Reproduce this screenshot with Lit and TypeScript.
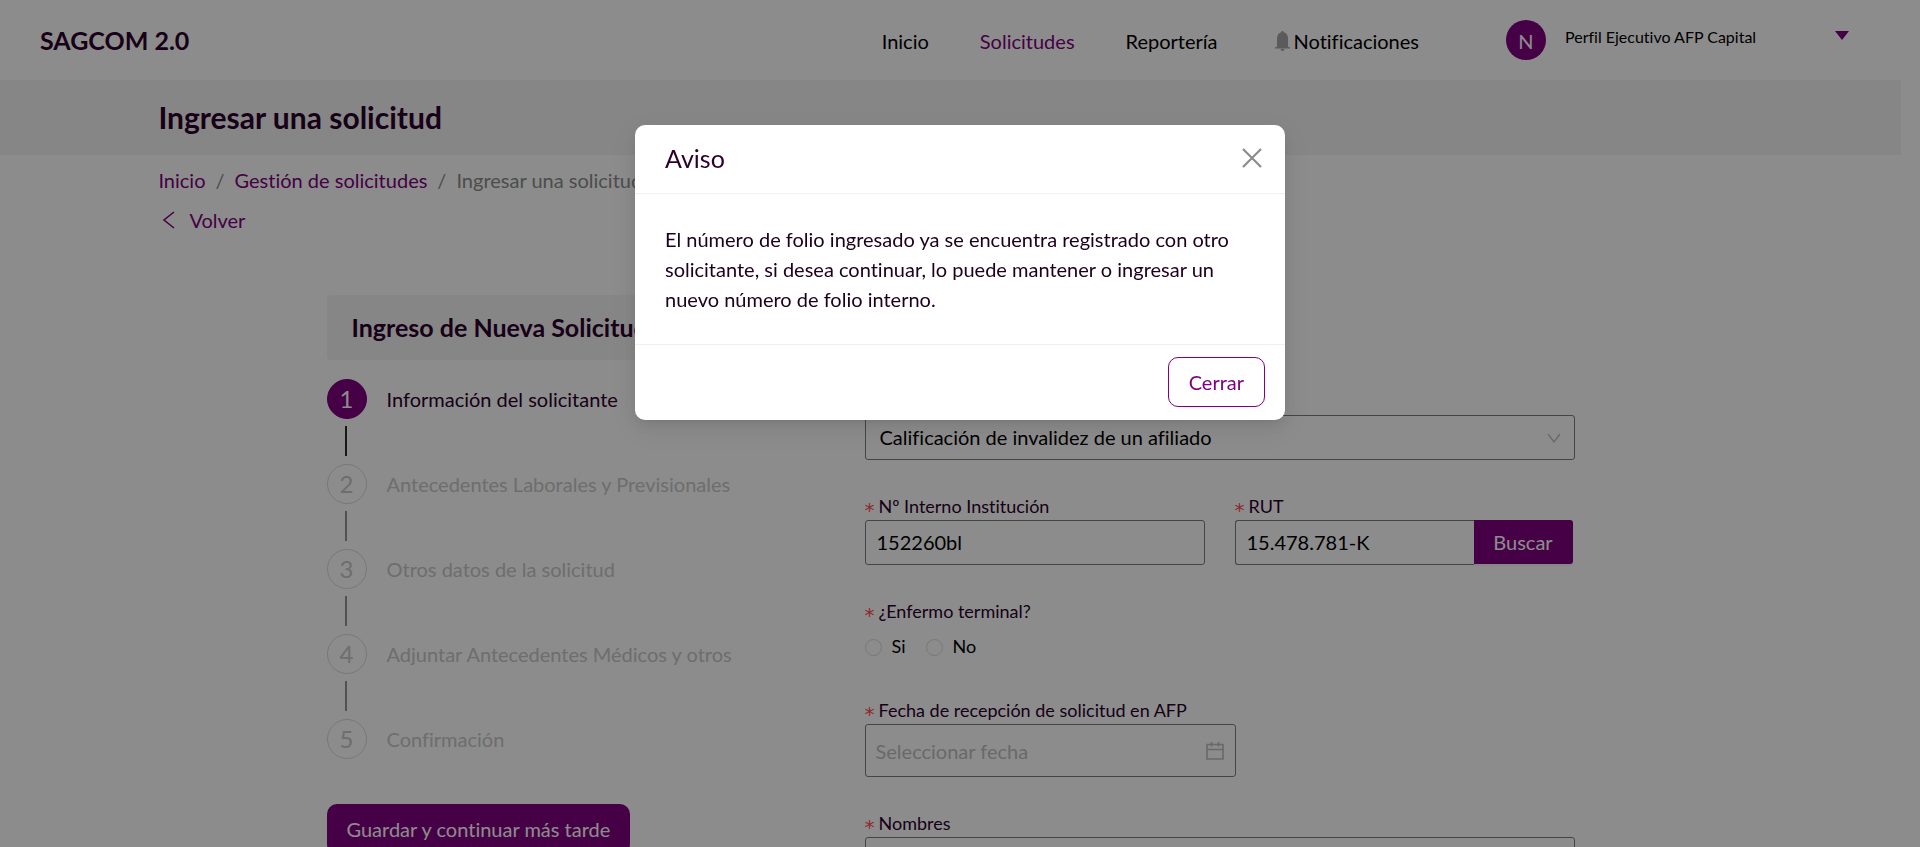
import { LitElement, html, css, svg } from "lit";
import { customElement } from "lit/decorators.js";
import { classMap } from "lit/directives/class-map.js";

const steps = [
  "Información del solicitante",
  "Antecedentes Laborales y Previsionales",
  "Otros datos de la solicitud",
  "Adjuntar Antecedentes Médicos y otros",
  "Confirmación",
];

const chevronLeft = svg`<path d="M12 1 L2 9 L12 17" fill="none" stroke="currentColor" stroke-width="1.600"/>`;

@customElement("app-header")
export class AppHeader extends LitElement {
  static styles = css`
    :host { display: block; }
    .bar { display: flex; align-items: flex-start; height: 80px; padding: 0 71px 0 40px; color: #000; }
    .brand { margin: 0 auto 0 0; font-size: 25px; font-weight: 700; line-height: 80px; color: #2c002c; }
    .nav { display: flex; gap: 51px; font-size: 20px; line-height: 82px; }
    .nav a { color: #000; text-decoration: none; }
    .nav .active { color: #800080; }
    .nav .bell { display: flex; gap: 4px; align-items: center; margin-left: 6px; line-height: 80px; }
    .bell svg { fill: #a6a6a6; }
    .user { display: flex; align-items: center; width: 343px; margin: 20px 0 0 87px; padding: 0; border: 0; background: none; font: inherit; font-size: 16px; color: #000; text-align: left; }
    .avatar { width: 40px; height: 40px; margin-right: 19px; border-radius: 50%; background: #800080; color: #fff; font-size: 20px; line-height: 42px; text-align: center; }
    .profile { flex: 1; line-height: 24px; padding-bottom: 6px; }
    .caret { fill: #800080; margin-bottom: 10px; }
  `;

  render() {
    return html`
      <header class="bar">
        <p class="brand">SAGCOM 2.0</p>
        <nav class="nav">
          <a href="#inicio">Inicio</a>
          <a href="#solicitudes" class="active">Solicitudes</a>
          <a href="#reporteria">Reportería</a>
          <a href="#notificaciones" class="bell">
            <svg width="15" height="20" viewBox="0 0 15 20" aria-hidden="true">
              <path d="M7.500 0 a1.200 1.200 0 0 1 1.200 1.300 C11.500 2 13 4.300 13 7.500 V15.500 L15 16.500 V17.500 H0 V16.500 L2 15.500 V7.500 C2 4.300 3.500 2 6.300 1.300 A1.200 1.200 0 0 1 7.500 0 Z M5.500 18 H9.500 A2 2 0 0 1 5.500 18 Z" />
            </svg>
            <span>Notificaciones</span>
          </a>
        </nav>
        <button class="user" type="button">
          <span class="avatar">N</span>
          <span class="profile">Perfil Ejecutivo AFP Capital</span>
          <svg class="caret" width="14" height="9" viewBox="0 0 14 9" aria-hidden="true"><path d="M0 0 H14 L7 9 Z" /></svg>
        </button>
      </header>
    `;
  }
}

@customElement("step-list")
export class StepList extends LitElement {
  static styles = css`
    .steps { margin: 0; padding: 0; list-style: none; }
    .step { display: grid; grid-template-columns: 40px 1fr; column-gap: 20px; height: 85px; grid-template-rows: 40px 30px; row-gap: 7px; color: #c8c8c8; }
    .step:last-child { height: 40px; }
    .dot { box-sizing: border-box; width: 40px; height: 40px; border: 1px solid #dadada; border-radius: 50%; font-size: 24px; line-height: 38px; text-align: center; }
    .name { font-size: 20px; line-height: 40px; white-space: nowrap; }
    .line { width: 2px; height: 30px; margin-left: 18px; background: #949494; }
    .current { color: #2c002c; }
    .current .dot { border-color: #800080; background: #800080; color: #fff; }
    .current .line { background: #2a2a2a; }
  `;

  render() {
    return html`
      <ol class="steps">
        ${steps.map(
          (name, i) => html`
            <li class=${classMap({ step: true, current: i === 0 })}>
              <span class="dot">${i + 1}</span>
              <span class="name">${name}</span>
              ${i < steps.length - 1 ? html`<span class="line"></span>` : null}
            </li>
          `
        )}
      </ol>
    `;
  }
}

@customElement("request-form")
export class RequestForm extends LitElement {
  static styles = css`
    :host { display: block; }
    * { box-sizing: border-box; }
    .form { display: grid; grid-template-columns: 1fr 1fr; column-gap: 30px; }
    .wide { grid-column: 1 / -1; }
    .field { margin: 0 0 35px; padding: 0; border: 0; }
    .label { display: block; height: 25px; padding: 0; font-size: 18px; line-height: 23px; color: #2c002c; }
    .label::before { content: "*"; display: inline-block; width: 14px; font-family: "DejaVu Sans", sans-serif; font-size: 20px; line-height: 10px; vertical-align: -4px; color: #ff4d4f; }
    .control { display: block; width: 100%; height: 45px; padding: 0 11px 2px; border: 1px solid #7f7f7f; border-radius: 3px; background: #fff; color: #000; font: inherit; font-size: 20px; }
    .control::placeholder { color: #bfbfbf; opacity: 1; }
    .picker { position: relative; }
    .select { appearance: none; padding: 0 14px 2px; }
    .icon { position: absolute; right: 14px; top: 50%; translate: 0 -50%; pointer-events: none; fill: none; stroke: #bfbfbf; }
    .search { display: flex; padding-right: 2px; }
    .search .control { flex: 1; min-width: 0; border-right: 0; border-radius: 3px 0 0 3px; }
    .go { width: 99px; height: 44px; padding: 0; border: 0; border-radius: 0 3px 3px 0; background: #800080; color: #fff; font: inherit; font-size: 20px; box-shadow: 0 2px 0 rgba(0, 0, 0, 0.045); }
    .question { margin-bottom: 41px; }
    .options { display: flex; gap: 20px; padding-top: 9px; font-size: 18px; line-height: 24px; }
    .option { display: flex; gap: 10px; }
    .radio { appearance: none; width: 17px; height: 17px; margin: 5px 0 0; border: 1px solid #d9d9d9; border-radius: 50%; background: #fff; }
    .date { width: 371px; max-width: 100%; }
    .date .control { height: 53px; padding: 0 10px; }
    .date .icon { right: 12px; }
  `;

  render() {
    return html`
      <form class="form">
        <div class="field wide">
          <label class="label" for="tipo">Tipo de solicitud</label>
          <div class="picker">
            <select class="control select" id="tipo">
              <option>Calificación de invalidez de un afiliado</option>
            </select>
            <svg class="icon" width="14" height="10" viewBox="0 0 14 10" aria-hidden="true"><path d="M1 1 L7 9 L13 1" stroke-width="1.3" /></svg>
          </div>
        </div>
        <div class="field">
          <label class="label" for="folio">Nº Interno Institución</label>
          <input class="control" id="folio" type="text" value="152260bl" />
        </div>
        <div class="field">
          <label class="label" for="rut">RUT</label>
          <div class="search">
            <input class="control" id="rut" type="text" value="15.478.781-K" />
            <button class="go" type="button">Buscar</button>
          </div>
        </div>
        <fieldset class="field question wide">
          <legend class="label">¿Enfermo terminal?</legend>
          <div class="options">
            <label class="option"><input class="radio" type="radio" name="terminal" />Si</label>
            <label class="option"><input class="radio" type="radio" name="terminal" />No</label>
          </div>
        </fieldset>
        <div class="field date wide">
          <label class="label" for="fecha">Fecha de recepción de solicitud en AFP</label>
          <div class="picker">
            <input class="control" id="fecha" type="text" placeholder="Seleccionar fecha" />
            <svg class="icon" width="18" height="18" viewBox="0 0 18 18" aria-hidden="true">
              <path d="M1 2.500 H17 V17 H1 Z M1 7.500 H17 M5.500 0 V4.500 M12.500 0 V4.500" stroke-width="1.600" />
            </svg>
          </div>
        </div>
        <div class="field wide">
          <label class="label" for="nombres">Nombres</label>
          <input class="control" id="nombres" type="text" />
        </div>
      </form>
    `;
  }
}

@customElement("notice-dialog")
export class NoticeDialog extends LitElement {
  static styles = css`
    .mask { position: fixed; inset: 0; display: flex; justify-content: center; align-items: flex-start; padding: 125px 16px 0; background: rgba(0, 0, 0, 0.45); }
    .dialog { width: 650px; border-radius: 10px; background: #fff; color: #2c002c; box-shadow: 0 3px 6px -4px rgba(0, 0, 0, 0.12), 0 6px 16px rgba(0, 0, 0, 0.08), 0 9px 28px 8px rgba(0, 0, 0, 0.05); }
    .head { display: flex; justify-content: space-between; align-items: center; padding: 18px 23px 20px 30px; border-bottom: 1px solid #f0f0f0; }
    .title { margin: 0; font-size: 25px; font-weight: 400; line-height: 30px; }
    .close { display: flex; padding: 0; border: 0; background: none; color: #8c8c8c; }
    .text { margin: 0; padding: 30px; font-size: 20px; line-height: 30px; color: #1c001c; }
    .foot { display: flex; justify-content: flex-end; padding: 12px 20px 13px; border-top: 1px solid #f0f0f0; }
    .ok { height: 50px; padding: 0 20px; border: 1px solid #800080; border-radius: 10px; background: #fff; color: #800080; font: inherit; font-size: 20px; box-shadow: 0 2px 0 rgba(0, 0, 0, 0.015); }
  `;

  render() {
    return html`
      <div class="mask">
        <section class="dialog" role="dialog" aria-modal="true" aria-labelledby="title">
          <header class="head">
            <h2 class="title" id="title">Aviso</h2>
            <button class="close" type="button" aria-label="Cerrar aviso">
              <svg width="20" height="20" viewBox="0 0 20 20" aria-hidden="true"><path d="M1 1 L19 19 M19 1 L1 19" fill="none" stroke="currentColor" stroke-width="2.200" /></svg>
            </button>
          </header>
          <p class="text">El número de folio ingresado ya se encuentra registrado con otro solicitante, si desea continuar, lo puede mantener o ingresar un nuevo número de folio interno.</p>
          <footer class="foot"><button class="ok" type="button">Cerrar</button></footer>
        </section>
      </div>
    `;
  }
}

@customElement("app-root")
export class AppRoot extends LitElement {
  static styles = css`
    :host { display: block; height: 100vh; overflow: hidden; background: #fff; font-family: Lato, "Noto Sans", sans-serif; font-variant-ligatures: none; color: #000; }
    .page { padding-right: 19px; }
    .banner { padding: 0 8.333%; background: #f5f5f5; }
    .title { margin: 0; font-size: 30px; font-weight: 700; line-height: 75px; color: #2c002c; }
    .trail { padding: 10px 8.333% 0; font-size: 20px; line-height: 30px; }
    .crumbs { display: flex; gap: 10px; margin: 0; padding: 0; list-style: none; color: #8c8c8c; }
    .link { color: #800080; text-decoration: none; }
    .back { display: inline-flex; align-items: center; gap: 14px; margin-top: 10px; padding-left: 4px; }
    .content { display: grid; grid-template-columns: 485px minmax(0, 710px); justify-content: space-between; max-width: 1248px; margin: 59px auto 0; }
    .panel { margin: 0 0 19px; padding: 0 25px; border-radius: 4px; background: #f5f5f5; font-size: 25px; font-weight: 700; line-height: 65px; color: #2c002c; }
    .save { height: 50px; margin-top: 45px; padding: 0 20px; border: 0; border-radius: 10px; background: #800080; color: #fff; font: inherit; font-size: 20px; }
    .form { padding-top: 95px; }
  `;

  render() {
    return html`
      <app-header></app-header>
      <main class="page">
        <div class="banner"><h1 class="title">Ingresar una solicitud</h1></div>
        <div class="trail">
          <ol class="crumbs">
            <li><a class="link" href="#inicio">Inicio</a></li>
            <li aria-hidden="true">/</li>
            <li><a class="link" href="#gestion">Gestión de solicitudes</a></li>
            <li aria-hidden="true">/</li>
            <li>Ingresar una solicitud</li>
          </ol>
          <a class="link back" href="#volver">
            <svg width="13" height="18" viewBox="0 0 13 18" aria-hidden="true">${chevronLeft}</svg>
            Volver
          </a>
        </div>
        <div class="content">
          <aside>
            <h2 class="panel">Ingreso de Nueva Solicitud</h2>
            <step-list></step-list>
            <button class="save" type="button">Guardar y continuar más tarde</button>
          </aside>
          <request-form class="form"></request-form>
        </div>
      </main>
      <notice-dialog></notice-dialog>
    `;
  }
}
